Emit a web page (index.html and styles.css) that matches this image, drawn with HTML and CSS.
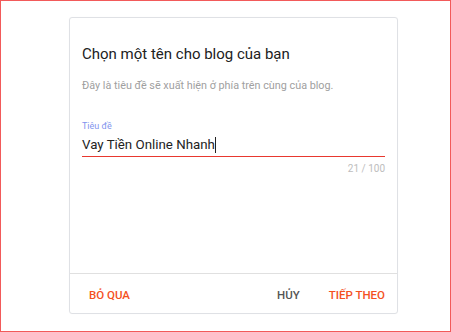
FILE: index.html
```html
<!DOCTYPE html>
<html>
<head>
    <link rel="stylesheet" href="styles.css">
</head>
<body>
    <div class="frame">
        <div class="dialog">
            <div class="dialog-body">
                <h2 class="title">Chọn một tên cho blog của bạn</h2>
                <p class="hint">Đây là tiêu đề sẽ xuất hiện ở phía trên cùng của blog.</p>
                <label class="label" for="blog-title">Tiêu đề</label>
                <div class="field">
                    <span class="value">Vay Tiền Online Nhanh</span><span class="caret"></span>
                </div>
                <div class="counter">21 / 100</div>
            </div>
            <div class="dialog-footer">
                <button class="btn accent">BỎ QUA</button>
                <div class="spacer"></div>
                <button class="btn muted">HỦY</button>
                <button class="btn accent">TIẾP THEO</button>
            </div>
        </div>
    </div>
</body>
</html>
```

FILE: styles.css
```css
* {
    box-sizing: border-box;
}

body {
    margin: 0;
    padding: 0;
    font-family: Roboto, "Liberation Sans", sans-serif;
    background-color: #fff;
}

.frame {
    width: 451px;
    height: 332px;
    border: 1px solid #f25a5a;
    padding: 16px 0 0 68px;
}

.dialog {
    width: 329px;
    height: 297px;
    border: 1px solid #dfe1e5;
    border-radius: 3px;
    display: flex;
    flex-direction: column;
    box-shadow: 0 0 1px rgba(0, 0, 0, 0.06);
}

.dialog-body {
    flex: 1;
    padding: 26px 12px 0 12px;
    display: flex;
    flex-direction: column;
}

.title {
    margin: 0;
    font-size: 15px;
    font-weight: 400;
    line-height: 20px;
    color: #212121;
}

.hint {
    margin: 14px 0 0 0;
    font-size: 10.8px;
    line-height: 16px;
    color: #a0a0a0;
}

.label {
    margin-top: 26px;
    font-size: 9px;
    line-height: 12px;
    color: #8193ee;
}

.field {
    margin-top: 3px;
    height: 22px;
    padding-bottom: 1px;
    border-bottom: 1px solid #e8382f;
    font-size: 13.3px;
    line-height: 20px;
    color: #222;
    display: flex;
    align-items: flex-start;
}

.caret {
    display: inline-block;
    width: 1px;
    height: 16px;
    margin-top: 2px;
    background-color: #222;
}

.counter {
    margin-top: 6px;
    text-align: right;
    font-size: 10px;
    line-height: 12px;
    color: #bdbdbd;
}

.dialog-footer {
    height: 40px;
    border-top: 1px solid #e0e0e0;
    display: flex;
    align-items: flex-start;
    padding: 13px 12px 0 19px;
}

.spacer {
    flex: 1;
}

.btn {
    border: 0;
    background: none;
    padding: 0;
    font-family: Roboto, "Liberation Sans", sans-serif;
    font-size: 11.5px;
    font-weight: 500;
    line-height: 16px;
    cursor: pointer;
}

.accent {
    color: #f4511e;
}

.muted {
    color: #555;
    margin-right: 29px;
}
```
